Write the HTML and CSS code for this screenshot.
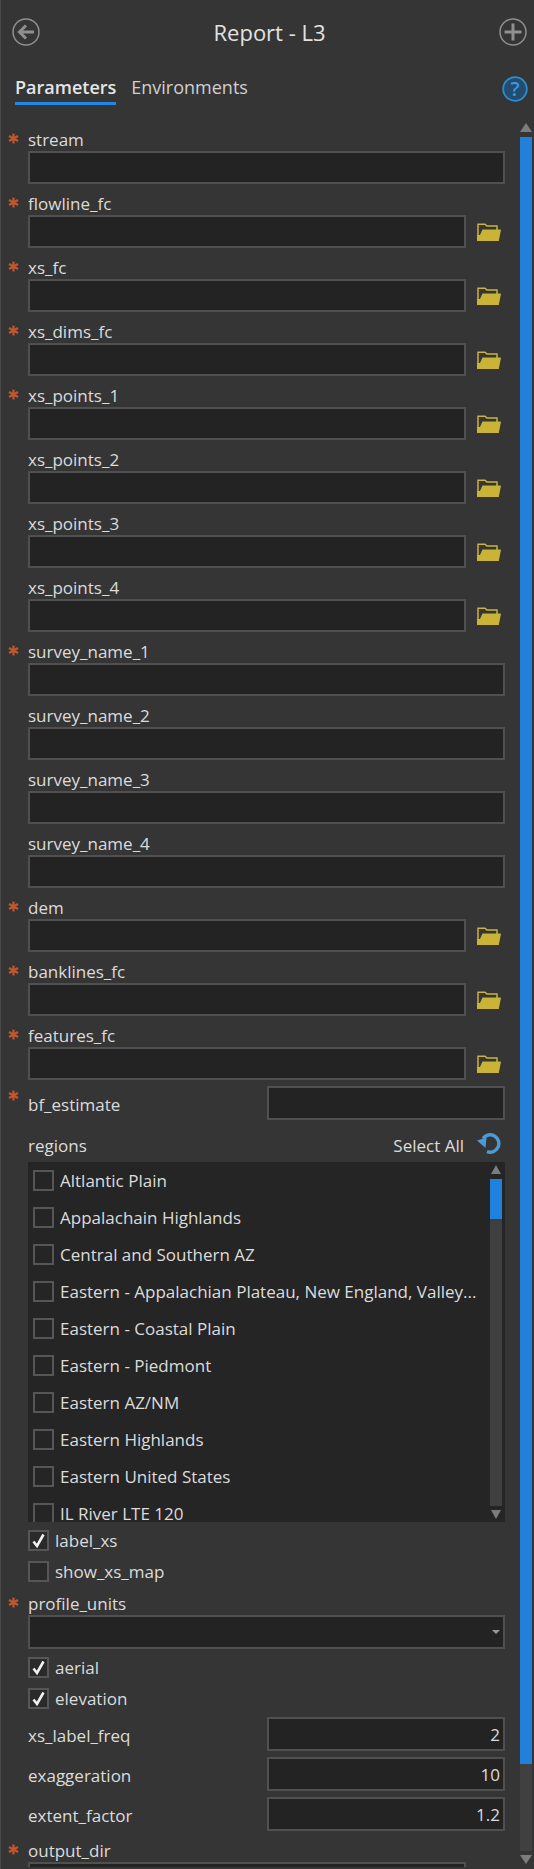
FILE: index.html
```html
<!DOCTYPE html>
<html lang="en">
<head>
    <meta charset="UTF-8">
    <title>Report - L3</title>
    <link rel="stylesheet" href="styles.css">
</head>
<body>
    <svg class="sprite" width="0" height="0">
        <symbol id="star" viewBox="0 0 11 11">
            <path d="M5.5 0.5V10.5M1 3L10 8M10 3L1 8" stroke="#c4552d" stroke-width="2.2" fill="none"/>
        </symbol>
        <symbol id="folder" viewBox="0 0 24 18">
            <path d="M1 17V1.2H8L10 3H20V7" stroke="#c9b437" stroke-width="1.5" fill="none"/>
            <path d="M0 18H21.8L24 6.5H5.5L3 12H0Z" fill="#c9b437"/>
        </symbol>
        <symbol id="check" viewBox="0 0 21 21">
            <path d="M5.5 11.5L9 16L15.5 4.5" stroke="#f0f0f0" stroke-width="2.6" fill="none"/>
        </symbol>
    </svg>

    <header class="title-bar">
        <svg class="round-icon" width="28" height="28" viewBox="0 0 28 28">
            <circle cx="14" cy="14" r="13" stroke="#8f8f8f" stroke-width="1.5" fill="none"/>
            <path d="M22 14H8M14 7.5L7.5 14L14 20.5" stroke="#8f8f8f" stroke-width="3" fill="none"/>
        </svg>
        <h1>Report - L3</h1>
        <svg class="round-icon" width="28" height="28" viewBox="0 0 28 28">
            <circle cx="14" cy="14" r="13" stroke="#8f8f8f" stroke-width="1.5" fill="none"/>
            <path d="M14 5.5V22.5M5.5 14H22.5" stroke="#8f8f8f" stroke-width="3" fill="none"/>
        </svg>
    </header>

    <nav class="tabs">
        <span class="tab active">Parameters</span>
        <span class="tab">Environments</span>
        <svg class="help" width="26" height="26" viewBox="0 0 26 26">
            <circle cx="13" cy="13" r="11.8" fill="#234d70" stroke="#2f8ccb" stroke-width="1.8"/>
            <text x="13" y="20" text-anchor="middle" class="help-mark">?</text>
        </svg>
    </nav>

    <div class="content">
        <form class="form">
            <div class="field"><label class="label"><span class="star"><svg width="11" height="11"><use href="#star"/></svg></span>stream</label><div class="input-row"><input type="text" class="input"></div></div>
            <div class="field"><label class="label"><span class="star"><svg width="11" height="11"><use href="#star"/></svg></span>flowline_fc</label><div class="input-row"><input type="text" class="input"><svg class="folder" width="24" height="18"><use href="#folder"/></svg></div></div>
            <div class="field"><label class="label"><span class="star"><svg width="11" height="11"><use href="#star"/></svg></span>xs_fc</label><div class="input-row"><input type="text" class="input"><svg class="folder" width="24" height="18"><use href="#folder"/></svg></div></div>
            <div class="field"><label class="label"><span class="star"><svg width="11" height="11"><use href="#star"/></svg></span>xs_dims_fc</label><div class="input-row"><input type="text" class="input"><svg class="folder" width="24" height="18"><use href="#folder"/></svg></div></div>
            <div class="field"><label class="label"><span class="star"><svg width="11" height="11"><use href="#star"/></svg></span>xs_points_1</label><div class="input-row"><input type="text" class="input"><svg class="folder" width="24" height="18"><use href="#folder"/></svg></div></div>
            <div class="field"><label class="label"><span class="star"></span>xs_points_2</label><div class="input-row"><input type="text" class="input"><svg class="folder" width="24" height="18"><use href="#folder"/></svg></div></div>
            <div class="field"><label class="label"><span class="star"></span>xs_points_3</label><div class="input-row"><input type="text" class="input"><svg class="folder" width="24" height="18"><use href="#folder"/></svg></div></div>
            <div class="field"><label class="label"><span class="star"></span>xs_points_4</label><div class="input-row"><input type="text" class="input"><svg class="folder" width="24" height="18"><use href="#folder"/></svg></div></div>
            <div class="field"><label class="label"><span class="star"><svg width="11" height="11"><use href="#star"/></svg></span>survey_name_1</label><div class="input-row"><input type="text" class="input"></div></div>
            <div class="field"><label class="label"><span class="star"></span>survey_name_2</label><div class="input-row"><input type="text" class="input"></div></div>
            <div class="field"><label class="label"><span class="star"></span>survey_name_3</label><div class="input-row"><input type="text" class="input"></div></div>
            <div class="field"><label class="label"><span class="star"></span>survey_name_4</label><div class="input-row"><input type="text" class="input"></div></div>
            <div class="field"><label class="label"><span class="star"><svg width="11" height="11"><use href="#star"/></svg></span>dem</label><div class="input-row"><input type="text" class="input"><svg class="folder" width="24" height="18"><use href="#folder"/></svg></div></div>
            <div class="field"><label class="label"><span class="star"><svg width="11" height="11"><use href="#star"/></svg></span>banklines_fc</label><div class="input-row"><input type="text" class="input"><svg class="folder" width="24" height="18"><use href="#folder"/></svg></div></div>
            <div class="field"><label class="label"><span class="star"><svg width="11" height="11"><use href="#star"/></svg></span>features_fc</label><div class="input-row"><input type="text" class="input"><svg class="folder" width="24" height="18"><use href="#folder"/></svg></div></div>

            <div class="number-row first"><span class="star star-high"><svg width="11" height="11"><use href="#star"/></svg></span><span class="number-label">bf_estimate</span><input type="text" class="number"></div>

            <div class="list-head">
                <span>regions</span>
                <span class="select-all">Select All</span>
                <svg class="reload" width="24" height="21" viewBox="0 0 24 21">
                    <path d="M6 5.5A8.7 8.7 0 1 1 10 18.6" stroke="#4a9bd4" stroke-width="3.4" fill="none"/>
                    <path d="M0 7.5L9.5 4.5L8.5 15Z" fill="#4a9bd4"/>
                </svg>
            </div>
            <div class="list">
                <div class="list-items">
                    <div class="list-item"><span class="cb"></span>Altlantic Plain</div>
                    <div class="list-item"><span class="cb"></span>Appalachain Highlands</div>
                    <div class="list-item"><span class="cb"></span>Central and Southern AZ</div>
                    <div class="list-item"><span class="cb"></span>Eastern - Appalachian Plateau, New England, Valley...</div>
                    <div class="list-item"><span class="cb"></span>Eastern - Coastal Plain</div>
                    <div class="list-item"><span class="cb"></span>Eastern - Piedmont</div>
                    <div class="list-item"><span class="cb"></span>Eastern AZ/NM</div>
                    <div class="list-item"><span class="cb"></span>Eastern Highlands</div>
                    <div class="list-item"><span class="cb"></span>Eastern United States</div>
                    <div class="list-item"><span class="cb"></span>IL River LTE 120</div>
                </div>
                <div class="list-scroll">
                    <i class="arrow-up"></i>
                    <div class="list-track"><div class="list-thumb"></div></div>
                    <i class="arrow-down"></i>
                </div>
            </div>

            <div class="check-row first"><span class="cb"><svg width="21" height="21"><use href="#check"/></svg></span>label_xs</div>
            <div class="check-row"><span class="cb"></span>show_xs_map</div>

            <div class="field tight"><label class="label"><span class="star"><svg width="11" height="11"><use href="#star"/></svg></span>profile_units</label>
                <div class="input-row"><div class="select"><i class="caret"></i></div></div>
            </div>

            <div class="check-row first"><span class="cb"><svg width="21" height="21"><use href="#check"/></svg></span>aerial</div>
            <div class="check-row"><span class="cb"><svg width="21" height="21"><use href="#check"/></svg></span>elevation</div>

            <div class="number-row top"><span class="number-label">xs_label_freq</span><input type="text" class="number" value="2"></div>
            <div class="number-row"><span class="number-label">exaggeration</span><input type="text" class="number" value="10"></div>
            <div class="number-row"><span class="number-label">extent_factor</span><input type="text" class="number" value="1.2"></div>

            <div class="field"><label class="label"><span class="star"><svg width="11" height="11"><use href="#star"/></svg></span>output_dir</label><div class="input-row"><input type="text" class="input"><svg class="folder" width="24" height="18"><use href="#folder"/></svg></div></div>
        </form>

        <div class="scrollbar">
            <i class="arrow-up big"></i>
            <div class="track"><div class="thumb"></div></div>
            <i class="arrow-down big"></i>
        </div>
    </div>
</body>
</html>
```

FILE: styles.css
```css
html, body {
    margin: 0;
    padding: 0;
}
body {
    width: 534px;
    height: 1869px;
    box-sizing: border-box;
    overflow: hidden;
    background-color: #353535;
    border-left: 1px solid #4a4a4a;
    color: #dcdcdc;
    font-family: "Open Sans", "Noto Sans", sans-serif;
    font-size: 17px;
}
.sprite {
    position: absolute;
}
.title-bar {
    height: 64px;
    display: flex;
    align-items: center;
    justify-content: space-between;
    padding: 0 7px 0 11px;
}
.title-bar h1 {
    margin: 0;
    font-size: 22px;
    font-weight: 400;
    color: #e2e2e2;
}
.tabs {
    height: 56px;
    display: flex;
    align-items: flex-start;
    padding-left: 14px;
}
.tab {
    height: 38px;
    line-height: 46px;
    box-sizing: border-box;
    margin-right: 15px;
    font-size: 18px;
    color: #d0d0d0;
}
.tab.active {
    font-weight: 600;
    color: #e6e6e6;
    border-bottom: 3px solid #2089e6;
    height: 41px;
}
.help {
    margin: 12px 6px 0 auto;
}
.help-mark {
    font-size: 20px;
    font-weight: 600;
    fill: #3d9ad9;
}
.content {
    display: flex;
    height: 1747px;
    overflow: hidden;
}
.form {
    width: 504px;
    flex: none;
}
.field {
    margin-top: 9px;
}
.field.tight {
    margin-top: 6px;
}
.label {
    display: flex;
    height: 22px;
    line-height: 21px;
}
.star {
    width: 27px;
    flex: none;
    padding-left: 7px;
    box-sizing: border-box;
}
.star svg {
    display: block;
    margin-top: 4px;
}
.input-row {
    display: flex;
    align-items: center;
    padding-left: 27px;
}
.input, .number, .select {
    box-sizing: border-box;
    border: 2px solid #505050;
    background-color: #232323;
    color: #dcdcdc;
    font-family: inherit;
    font-size: 17px;
    outline: none;
    border-radius: 0;
}
.input {
    flex: 1;
    min-width: 0;
    height: 33px;
    padding: 0 4px;
}
.folder {
    flex: none;
    margin: 0 4px 0 11px;
}
.number-row {
    display: flex;
    align-items: center;
    height: 34px;
    margin-top: 6px;
}
.number-row.top {
    margin-top: 3px;
}
.number-row:not(.first) {
    padding-left: 27px;
}
.number-label {
    flex: 1;
    padding-top: 3px;
}
.star-high {
    align-self: flex-start;
}
.number {
    flex: none;
    width: 238px;
    height: 34px;
    padding: 0 3px;
    text-align: right;
}
.list-head {
    display: flex;
    align-items: center;
    height: 30px;
    margin-top: 10px;
    padding: 0 4px 2px 27px;
}
.select-all {
    margin-left: auto;
    margin-right: 13px;
}
.reload {
    margin-bottom: 4px;
}
.list {
    display: flex;
    height: 360px;
    margin-left: 27px;
    background-color: #252525;
    overflow: hidden;
}
.list-items {
    flex: 1;
    min-width: 0;
}
.list-item {
    display: flex;
    align-items: center;
    height: 37px;
    padding-left: 5px;
    padding-bottom: 1px;
    box-sizing: border-box;
    white-space: nowrap;
}
.list-item .cb {
    margin-right: 6px;
    margin-top: 1px;
}
.cb {
    flex: none;
    width: 21px;
    height: 21px;
    box-sizing: border-box;
    border: 2px solid #565656;
    background-color: #2a2a2a;
}
.cb svg {
    display: block;
    margin: -2px;
}
.list-item .cb {
    background-color: #252525;
}
.list-scroll {
    flex: none;
    width: 12px;
    margin-right: 3px;
    display: flex;
    flex-direction: column;
    align-items: center;
    padding-top: 3px;
    box-sizing: border-box;
    height: 360px;
}
.list-track {
    width: 12px;
    height: 327px;
    margin: 5px 0 4px;
    background-color: #3f3f3f;
}
.list-thumb {
    height: 40px;
    background-color: #2080dc;
}
.arrow-up, .arrow-down {
    display: block;
    width: 0;
    height: 0;
    border-left: 5.5px solid transparent;
    border-right: 5.5px solid transparent;
}
.arrow-up {
    border-bottom: 9px solid #7c7c7c;
}
.arrow-down {
    border-top: 9px solid #7c7c7c;
}
.check-row {
    display: flex;
    align-items: center;
    height: 31px;
    padding-left: 27px;
}
.check-row.first {
    margin-top: 3px;
}
.check-row .cb {
    margin-right: 6px;
}
.select {
    flex: 1;
    height: 34px;
    display: flex;
    align-items: center;
    justify-content: flex-end;
    padding-right: 3px;
}
.caret {
    width: 0;
    height: 0;
    border-left: 4.5px solid transparent;
    border-right: 4.5px solid transparent;
    border-top: 4.5px solid #9a9a9a;
}
.scrollbar {
    flex: none;
    width: 12px;
    margin-left: 15px;
    display: flex;
    flex-direction: column;
    align-items: center;
    padding-top: 3px;
}
.arrow-up.big, .arrow-down.big {
    border-left-width: 6px;
    border-right-width: 6px;
}
.track {
    width: 12px;
    height: 1714px;
    margin: 5px 0 4px;
    background-color: #404040;
}
.thumb {
    height: 1627px;
    background-color: #2080dc;
}
```
